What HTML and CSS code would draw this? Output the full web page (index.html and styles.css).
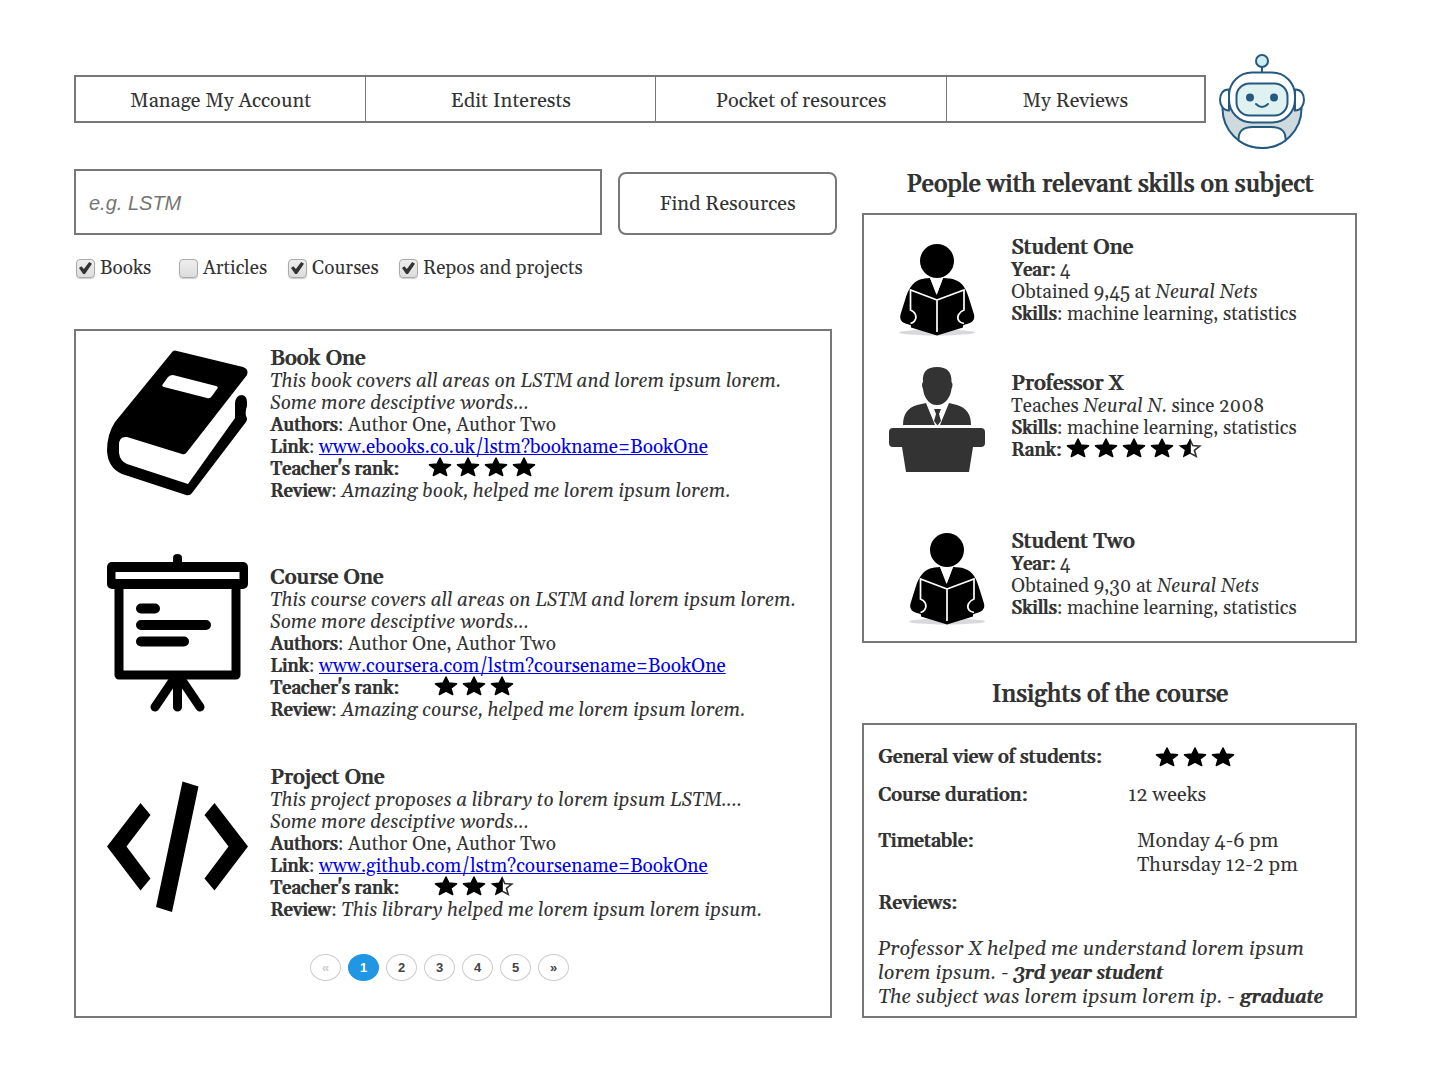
FILE: index.html
```html
<!DOCTYPE html>
<html lang="en">
<head>
<meta charset="utf-8">
<meta name="viewport" content="width=device-width, initial-scale=1">
<title>Resource finder</title>
<link rel="stylesheet" href="styles.css">
</head>
<body>
<svg class="defs" aria-hidden="true">
  <symbol id="star" viewBox="0 0 24 20"><path d="M12 1l3 6 7.500.8-5.600 4.300 1.800 6.400-6.700-3.300-6.700 3.300 1.800-6.400-5.600-4.300L9 7z" stroke="#000" stroke-linejoin="round" stroke-width="1.500"/></symbol>
  <symbol id="half-star" viewBox="0 0 24 20"><path d="M12 1.500l2.800 6 7 .7-5.400 4.100 1.800 6-6.200-3.200z" fill="#fff" stroke="#333" stroke-width="1.600"/><path d="M12.500 0v15.600l-7.700 3.900 2-7.500L.5 7.400l8.300-.8z"/></symbol>
  <symbol id="reader" viewBox="0 0 78 92">
    <ellipse cx="38" cy="88.500" rx="38" ry="3" fill="#d9d9dd"/>
    <circle cx="38" cy="17" r="17"/>
    <path d="M21 35.500Q25 34 31 34l7 16 6-16q7 0 11 1.500c9 3 12 9 15 19l5 16c1.500 6-3 9-9 10l-2 1v2l-26 8-26-8v-2l-2-1c-6-1-10-4-8.500-10l5-16c3-10 7-16 14.500-19z"/>
    <path d="M31 34h13l-6.500 17z" fill="#fff"/>
    <path d="M38 56L11.500 46v20c5 2 7 7 4 11-1 1.500-2 2-4 2.500M38 56l27-10v20c-5 2-8 7-5 11 1 1.500 3 2 5 2.500M38 56v32" fill="none" stroke="#fff" stroke-width="1.700"/>
  </symbol>
</svg>
<div class="page">
  <header class="top">
    <nav class="nav">
      <a href="#account">Manage My Account</a>
      <a href="#interests">Edit Interests</a>
      <a href="#pocket">Pocket of resources</a>
      <a href="#reviews">My Reviews</a>
    </nav>
    <svg class="bot" viewBox="0 0 86 95" role="img" aria-label="Assistant" fill="#fff" stroke="#245a80" stroke-width="2">
      <path d="M3.500 54.500a39.500 39.500 0 0 0 79 0z" fill="#cfdadf"/>
      <path d="M19.700 86.500Q18.500 73 34 73h18q15.500 0 14.500 13.500Q56 94 43 94T19.700 86.500z"/>
      <path d="M10 35.500c-12-1-12 21 0 21zM76 35.500c12-1 12 21 0 21z"/>
      <path d="M43 18v-5"/>
      <circle cx="43" cy="7" r="6" fill="#cdeef0"/>
      <rect x="10" y="18.500" width="66" height="50" rx="23"/>
      <rect x="17.500" y="29.500" width="51" height="32" rx="13" fill="#dff2f1"/>
      <circle cx="31" cy="43.500" r="3" fill="#245a80"/><circle cx="55" cy="43.500" r="3" fill="#245a80"/>
      <path d="M37 50q6 6 12 0" fill="none" stroke-linecap="round"/>
    </svg>
  </header>

  <main class="columns">
    <section class="left">
      <form class="search">
        <input class="query" type="text" placeholder="e.g. LSTM" aria-label="Search subject">
        <button class="find" type="button">Find Resources</button>
      </form>
      <div class="filters">
        <label><input type="checkbox" checked>Books</label>
        <label><input type="checkbox">Articles</label>
        <label><input type="checkbox" checked>Courses</label>
        <label><input type="checkbox" checked>Repos and projects</label>
      </div>
      <div class="panel results">
        <article class="item">
          <svg class="pic" viewBox="0 0 141 160" aria-hidden="true">
            <path d="M66 1q2-1 4 0l66 16q6 2 4 8L80 102q-2 3-5 2L20 87q-8-1-8 8v8q1 8 8 11l61 20L128 68V53q1-8 7-8 5 1 5 7v4q-2 5-1 10 2 3 0 6L85 143q-2 3-6 2L15 124Q1 118 0 101 0 84 8 72z"/>
            <path d="M66 25l43 11q3 1 1 3l-5 7q-2 3-5 2L57 37q-3-1-1-3l5-7q2-2 5-2z" fill="#fff"/>
          </svg>
          <div class="text">
            <h2>Book One</h2>
            <p><i>This book covers all areas on LSTM and lorem ipsum lorem.<br>Some more desciptive words...</i></p>
            <p><b>Authors</b>: Author One, Author Two</p>
            <p><b>Link</b>: <a href="#book">www.ebooks.co.uk/lstm?bookname=BookOne</a></p>
            <p class="rank"><b>Teacher's rank:</b><span class="stars"><svg><use href="#star"/></svg><svg><use href="#star"/></svg><svg><use href="#star"/></svg><svg><use href="#star"/></svg></span></p>
            <p><b>Review</b>: <i>Amazing book, helped me lorem ipsum lorem.</i></p>
          </div>
        </article>
        <article class="item">
          <svg class="pic" viewBox="0 0 141 160" aria-hidden="true">
            <path d="M66 12V4q0-4 4.500-4T75 4v8" />
            <rect x="0" y="8" width="141" height="27" rx="5"/>
            <rect x="8.500" y="18" width="124" height="7" fill="#fff"/>
            <rect x="12" y="30" width="117" height="91" fill="none" stroke="#000" stroke-width="9" stroke-linejoin="round"/>
            <path d="M34 54.500h14M34 71h65M34 87.500h43" stroke="#000" stroke-width="10" stroke-linecap="round"/>
            <path d="M70.500 122v31M69 122l-21 31M72 122l21 31" stroke="#000" stroke-width="9" stroke-linecap="round"/>
          </svg>
          <div class="text">
            <h2>Course One</h2>
            <p><i>This course covers all areas on LSTM and lorem ipsum lorem.<br>Some more desciptive words...</i></p>
            <p><b>Authors</b>: Author One, Author Two</p>
            <p><b>Link</b>: <a href="#course">www.coursera.com/lstm?coursename=BookOne</a></p>
            <p class="rank"><b>Teacher's rank:</b><span class="stars"><svg><use href="#star"/></svg><svg><use href="#star"/></svg><svg><use href="#star"/></svg></span></p>
            <p><b>Review</b>: <i>Amazing course, helped me lorem ipsum lorem.</i></p>
          </div>
        </article>
        <article class="item">
          <svg class="pic" viewBox="0 -4 141 160" aria-hidden="true">
            <path d="M33.500 30l10 12L19.500 73.500l24 32-10 12L0 73.500zM107.500 30l-10 12 24 31.500-24 32 10 12L141 73.500zM75.500 8.500l16 5L65 139l-16-5z"/>
          </svg>
          <div class="text">
            <h2>Project One</h2>
            <p><i>This project proposes a library to lorem ipsum LSTM....<br>Some more desciptive words...</i></p>
            <p><b>Authors</b>: Author One, Author Two</p>
            <p><b>Link</b>: <a href="#project">www.github.com/lstm?coursename=BookOne</a></p>
            <p class="rank"><b>Teacher's rank:</b><span class="stars"><svg><use href="#star"/></svg><svg><use href="#star"/></svg><svg><use href="#half-star"/></svg></span></p>
            <p><b>Review</b>: <i>This library helped me lorem ipsum lorem ipsum.</i></p>
          </div>
        </article>
        <nav class="pages" aria-label="Pages">
          <button type="button" disabled>«</button>
          <button type="button" class="current">1</button>
          <button type="button">2</button>
          <button type="button">3</button>
          <button type="button">4</button>
          <button type="button">5</button>
          <button type="button">»</button>
        </nav>
      </div>
    </section>

    <aside class="right">
      <h1>People with relevant skills on subject</h1>
      <div class="panel people">
        <article class="person">
          <svg class="reader" aria-hidden="true"><use href="#reader"/></svg>
          <div class="text">
            <h2>Student One</h2>
            <p><b>Year:</b> 4</p>
            <p>Obtained 9,45 at <i>Neural Nets</i></p>
            <p><b>Skills</b>: machine learning, statistics</p>
          </div>
        </article>
        <article class="person professor">
          <svg class="speaker" viewBox="0 0 96 107" aria-hidden="true" fill="#333">
            <path d="M48 1c10 0 15 5 14.500 15q2 2 0 7c-1 8-6 16-14.500 16S35 31 34 23q-2-5 0-7C33 6 38 1 48 1z"/>
            <path d="M37 37l9 22H14q0-16 14-20zM60 37l-9 22h31q0-16-14-20z"/>
            <path d="M45 43h7l-2 5 2 7-3.500 4.500L45 55l2-7z"/>
            <path d="M4 62h88q4 0 4 4v11q0 4-4 4h-8l-4 25H17l-4-25H4q-4 0-4-4V66q0-4 4-4z"/>
          </svg>
          <div class="text">
            <h2>Professor X</h2>
            <p>Teaches <i>Neural N.</i> since 2008</p>
            <p><b>Skills</b>: machine learning, statistics</p>
            <p class="rank tight"><b>Rank:</b><span class="stars"><svg><use href="#star"/></svg><svg><use href="#star"/></svg><svg><use href="#star"/></svg><svg><use href="#star"/></svg><svg><use href="#half-star"/></svg></span></p>
          </div>
        </article>
        <article class="person last">
          <svg class="reader" aria-hidden="true"><use href="#reader"/></svg>
          <div class="text">
            <h2>Student Two</h2>
            <p><b>Year:</b> 4</p>
            <p>Obtained 9,30 at <i>Neural Nets</i></p>
            <p><b>Skills</b>: machine learning, statistics</p>
          </div>
        </article>
      </div>
      <h1 class="second">Insights of the course</h1>
      <div class="panel insights">
        <dl>
          <dt>General view of students:</dt>
          <dd class="score"><span class="stars"><svg><use href="#star"/></svg><svg><use href="#star"/></svg><svg><use href="#star"/></svg></span></dd>
          <dt>Course duration:</dt>
          <dd class="duration">12 weeks</dd>
          <dt>Timetable:</dt>
          <dd class="times">Monday 4-6 pm<br>Thursday 12-2 pm</dd>
          <dt>Reviews:</dt>
        </dl>
        <p><i>Professor X helped me understand lorem ipsum lorem ipsum. - <b>3rd year student</b></i></p>
        <p><i>The subject was lorem ipsum lorem ip. - <b>graduate</b></i></p>
      </div>
    </aside>
  </main>
</div>
</body>
</html>
```
FILE: styles.css
```css
* { box-sizing: border-box; }
body, h1, h2, p, dl, dd { margin: 0; }
body {
  background: #fff;
  color: #333;
  font: 19px/22px Georgia, Gelasio, "Liberation Serif", serif;
}
/* Double-struck regular weight instead of the bold cut */
b, h1, h2, dt { font-weight: normal; text-shadow: 1px 0 currentColor; }
a { color: #00e; }
.defs { display: none; }
.page { padding: 54px 92px 56px 74px; }

.top { display: flex; gap: 13px; padding-right: 52px; }
.nav {
  flex: 1;
  display: grid;
  grid-template-columns: 290fr 291fr 291fr 259fr;
  height: 48px;
  margin-top: 21px;
  border: 2px solid #777;
}
.nav a {
  display: flex;
  align-items: center;
  justify-content: center;
  padding-top: 4px;
  color: inherit;
  text-decoration: none;
  font-size: 20px;
}
.nav a + a { border-left: 1px solid #777; }
.bot { width: 86px; height: 95px; }

.columns { display: grid; grid-template-columns: 763fr 495fr; gap: 25px; }
.left { padding-top: 20px; }
.search { display: flex; align-items: flex-end; gap: 16px; }
.query {
  flex: 1;
  min-width: 0;
  height: 66px;
  padding: 2px 13px 0;
  border: 2px solid #777;
  font: italic 20px "Liberation Sans", sans-serif;
}
.query::placeholder { color: #757575; }
.find {
  width: 219px;
  height: 63px;
  border: 2px solid #777;
  border-radius: 8px;
  background: #fff;
  color: inherit;
  font: inherit;
  font-size: 20px;
}
.filters {
  display: grid;
  grid-template-columns: 103px 109px 111px auto;
  padding: 22px 0 0 2px;
}
.filters label { display: flex; align-items: center; gap: 5px; }
.filters input {
  appearance: none;
  display: grid;
  place-items: center;
  width: 19px;
  height: 19px;
  margin: 0;
  border: 1px solid #aaa;
  border-radius: 4px;
  background: linear-gradient(#eee, #ddd);
  box-shadow: 0 1px 1px #ccc;
}
.filters input:checked::before {
  content: "";
  width: 13px;
  height: 12px;
  background: #333;
  clip-path: polygon(0 50%, 18% 36%, 38% 58%, 78% 0, 100% 14%, 46% 100%, 32% 100%);
}

.panel { border: 2px solid #777; }
.results { margin: 50px 5px 0 0; padding: 15px 30px 35px 31px; }
.item { display: flex; gap: 22px; align-items: flex-start; margin-bottom: 44px; }
.pic { width: 141px; height: 160px; margin-top: 4px; flex: none; }
.item:nth-child(2) .pic { margin-top: 0; }
.item:nth-child(2) .text { padding-top: 11px; }
.item:nth-child(3) { margin-bottom: 25px; }
.text { flex: 1; }
h2 { margin-bottom: -2px; font-size: 22px; line-height: 26px; }
.rank { display: flex; }
.rank b { width: 158px; }
.item + .item .rank b { width: 164px; }
.rank.tight b { width: 55px; }
.stars { display: flex; gap: 4px; align-items: center; }
.item .stars, .tight .stars { height: 18px; }
.stars svg { width: 24px; height: 20px; flex: none; }
.pages { display: flex; gap: 7px; padding-left: 203px; }
.pages button {
  width: 31px;
  height: 27px;
  padding: 0;
  border: 1px solid #ccc;
  border-radius: 50%;
  background: #fff;
  color: #444;
  font: bold 13px "Liberation Sans", sans-serif;
}
.pages button:disabled { color: #ccc; }
.pages .current { background: #2196e3; border-color: #2196e3; color: #fff; }

h1 { font-size: 25px; line-height: 32px; text-align: center; }
.right h1 { padding: 20px 0 12px; }
.right .second { padding-top: 36px; }
.people { padding: 20px 20px 16px 25px; }
.person { display: flex; gap: 26px; align-items: flex-start; }
.reader { width: 78px; height: 92px; margin: 9px 8px 0 10px; flex: none; }
.speaker { width: 96px; height: 107px; flex: none; }
.professor { margin: 30px 0 56px; }
.professor .text { padding-top: 5px; }
.last .reader { margin: 4px -2px 0 20px; }

.insights { padding: 20px 14px 7px; font-size: 20px; line-height: 24px; }
dl { display: grid; grid-template-columns: 250px 1fr; margin-bottom: 22px; }
dd, dt { margin-bottom: 14px; }
.score { padding-left: 27px; }
.score .stars { height: 24px; }
.duration { margin-bottom: 22px; }
.times { padding-left: 9px; }
dt:last-child { margin-bottom: 0; }
```
